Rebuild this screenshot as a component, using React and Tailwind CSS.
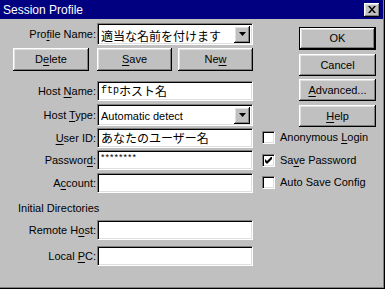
const sunken =
  "bg-white border border-t-[#808080] border-l-[#808080] border-b-white border-r-white shadow-[inset_1px_1px_0_#000,inset_-1px_-1px_0_#dfdfdf]";
const raised =
  "bg-[#c0c0c0] shadow-[inset_-1px_-1px_0_#000,inset_1px_1px_0_#fff,inset_-2px_-2px_0_#808080,inset_2px_2px_0_#dfdfdf]";
const ui = { fontFamily: '"Liberation Sans", Arial, sans-serif' };
const jp = { fontFamily: '"Noto Sans CJK JP", "Liberation Sans", sans-serif' };

function U({ children }) {
  return <span className="underline underline-offset-2">{children}</span>;
}

function Label({ children }) {
  return (
    <div className="w-[96px] text-right text-[11px] leading-none text-black">
      {children}
    </div>
  );
}

function Field({ children, className = "" }) {
  return (
    <div className={`ml-px w-[156px] h-[20px] flex items-center pl-[3px] ${sunken} ${className}`}>
      {children}
    </div>
  );
}

function Combo({ children, style }) {
  return (
    <div className={`ml-px w-[156px] h-[22px] flex items-center pl-[3px] pr-[2px] ${sunken}`}>
      <div className="flex-1 whitespace-nowrap overflow-hidden" style={style}>
        {children}
      </div>
      <div className={`w-[16px] h-[17px] flex items-center justify-center ${raised}`}>
        <svg width="7" height="4" viewBox="0 0 7 4">
          <path d="M0 0h7L3.5 4z" fill="#000" />
        </svg>
      </div>
    </div>
  );
}

function Button({ children, className = "", def = false }) {
  return (
    <div className={`${def ? "border border-black" : ""} ${className}`}>
      <div className={`w-full h-full flex items-center justify-center text-[11px] ${raised}`}>
        {children}
      </div>
    </div>
  );
}

function Check({ checked, children, className = "" }) {
  return (
    <div className={`flex items-center ${className}`}>
      <div className={`w-[13px] h-[13px] flex items-center justify-center ${sunken}`}>
        {checked && (
          <svg width="7" height="7" viewBox="0 0 7 7">
            <path d="M0 2v3l2 2 5-5V-1L2 4z" fill="#000" />
          </svg>
        )}
      </div>
      <span className="ml-[5px] text-[11px] leading-none">{children}</span>
    </div>
  );
}

export default function App() {
  return (
    <div
      className="w-[385px] h-[289px] bg-[#c0c0c0] flex flex-col shadow-[inset_-1px_-1px_0_#000,inset_-2px_-2px_0_#808080]"
      style={ui}
    >
      <div className="h-[19px] w-[383px] bg-[#000080] flex items-center justify-between pl-[3px] pr-[3px]">
        <span className="text-white text-[12px]">Session Profile</span>
        <div className={`w-[16px] h-[14px] flex items-center justify-center ${raised}`}>
          <svg width="8" height="7" viewBox="0 0 8 7">
            <path d="M0 0h2l2 2.5L6 0h2L5 3.5 8 7H6L4 4.5 2 7H0l3-3.5z" fill="#000" />
          </svg>
        </div>
      </div>

      <div className="flex">
        <div className="w-[262px] flex flex-col">
          <div className="flex items-center mt-[4px]">
            <Label>
              Pro<U>f</U>ile Name:
            </Label>
            <Combo style={jp}>
              <span className="text-[12px] leading-none">適当な名前を付けます</span>
            </Combo>
          </div>

          <div className="flex mt-[3px] h-[23px]">
            <Button className="ml-[13px] w-[76px]">
              D<U>e</U>lete
            </Button>
            <Button className="ml-[8px] w-[75px]">
              <U>S</U>ave
            </Button>
            <Button className="ml-[6px] w-[75px]">
              Ne<U>w</U>
            </Button>
          </div>

          <div className="flex items-center mt-[10px]">
            <Label>
              Host <U>N</U>ame:
            </Label>
            <Field>
              <span className="text-[10px] leading-none" style={{ fontFamily: '"Liberation Mono", monospace' }}>
                ftp
              </span>
              <span className="text-[12px] leading-none" style={jp}>
                ホスト名
              </span>
            </Field>
          </div>

          <div className="flex items-center mt-[3px]">
            <Label>
              Host <U>T</U>ype:
            </Label>
            <Combo>
              <span className="text-[11px] leading-none">Automatic detect</span>
            </Combo>
          </div>

          <div className="flex items-center mt-[2px]">
            <Label>
              <U>U</U>ser ID:
            </Label>
            <Field>
              <span className="text-[12px] leading-none" style={jp}>
                あなたのユーザー名
              </span>
            </Field>
          </div>

          <div className="flex items-center mt-[2px]">
            <Label>
              Passwor<U>d</U>:
            </Label>
            <Field className="!items-start pt-[2px]">
              <span className="text-[9px] leading-none tracking-[1px]">********</span>
            </Field>
          </div>

          <div className="flex items-center mt-[3px]">
            <Label>
              A<U>c</U>count:
            </Label>
            <Field />
          </div>

          <div className="ml-[18px] mt-[9px] text-[11px] leading-[13px]">Initial Directories</div>

          <div className="flex items-center mt-[5px]">
            <Label>
              Remote H<U>o</U>st:
            </Label>
            <Field />
          </div>

          <div className="flex items-center mt-[6px]">
            <Label>
              Local <U>P</U>C:
            </Label>
            <Field />
          </div>
        </div>

        <div className="flex flex-col">
          <Button def className="ml-[37px] mt-[8px] w-[77px] h-[23px]">
            OK
          </Button>
          <Button className="ml-[37px] mt-[4px] w-[77px] h-[22px]">Cancel</Button>
          <Button className="ml-[37px] mt-[3px] w-[77px] h-[22px]">
            <U>A</U>dvanced...
          </Button>
          <Button className="ml-[37px] mt-[4px] w-[77px] h-[22px]">
            <U>H</U>elp
          </Button>
          <Check className="mt-[4px]">
            Anonymous <U>L</U>ogin
          </Check>
          <Check checked className="mt-[10px]">
            Sa<U>v</U>e Password
          </Check>
          <Check className="mt-[9px]">Auto Save Config</Check>
        </div>
      </div>
    </div>
  );
}
